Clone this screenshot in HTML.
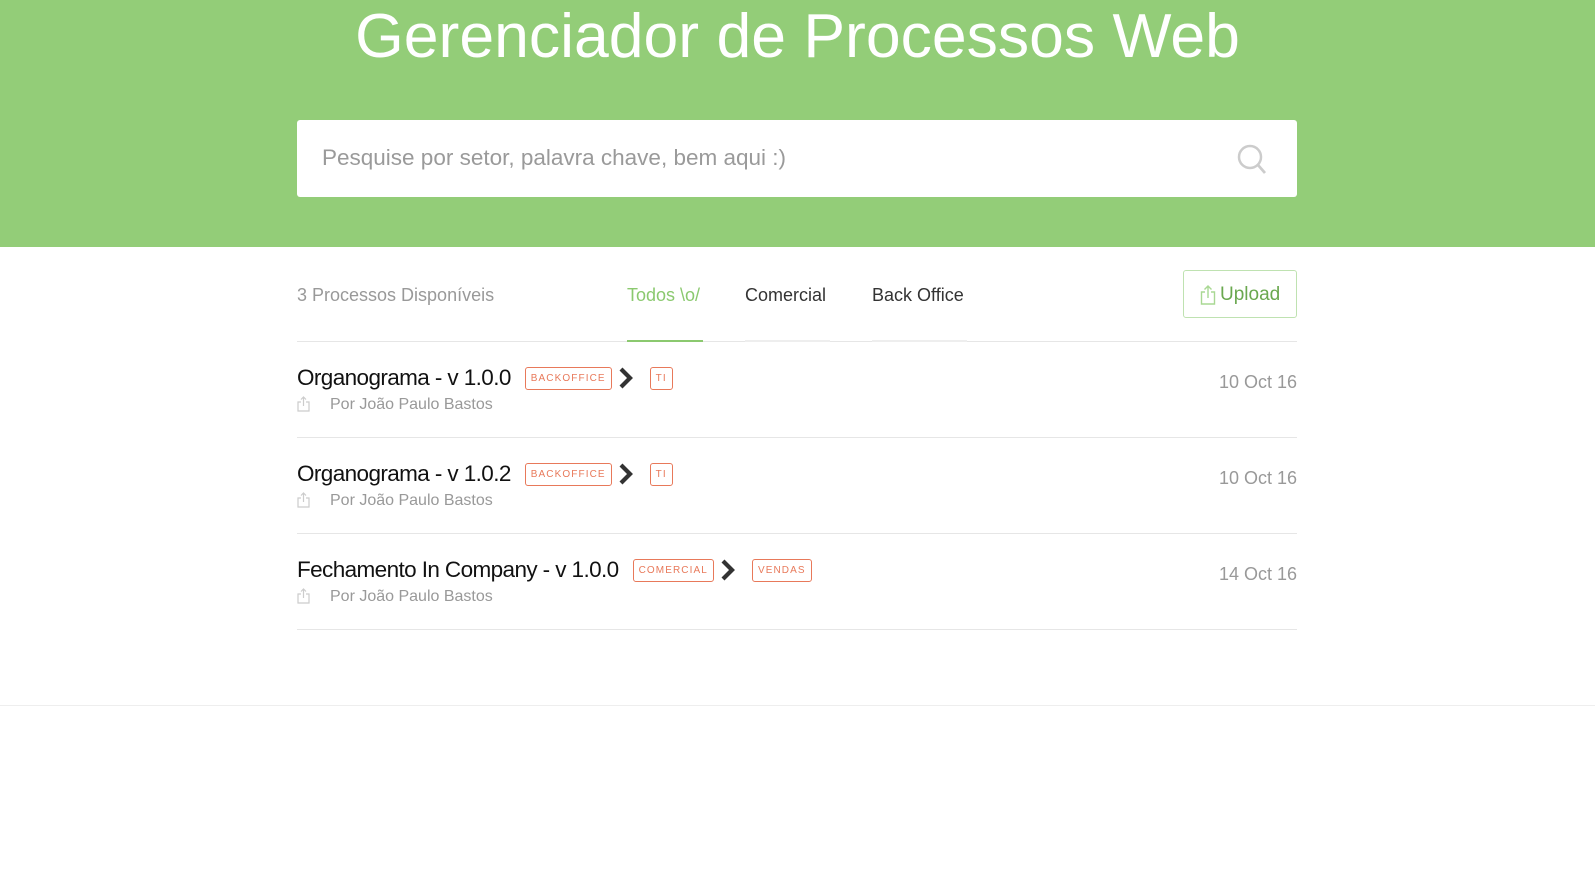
<!DOCTYPE html>
<html><head><meta charset="utf-8"><style>
*{margin:0;padding:0;box-sizing:border-box}
body{width:1595px;height:880px;background:#fff;font-family:"Liberation Sans",Arial,sans-serif;position:relative;overflow:hidden}
.hdr{position:absolute;left:0;top:0;width:1595px;height:247px;background:#93cd78}
.ttl{position:absolute;left:0;width:1595px;top:-1px;text-align:center;color:#fff;font-size:62.5px;line-height:75px}
.search{position:absolute;left:297px;top:120px;width:1000px;height:77px;background:#fff;border-radius:3px}
.search span{position:absolute;left:25px;top:26px;font-size:22.5px;color:#9a9a9a;line-height:24px}
.f{position:absolute;top:285px;font-size:18px;line-height:20px;color:#333}
.ul{position:absolute;top:340px;height:3px}
.line{position:absolute;height:1px;background:#e6e6e6}
.up{position:absolute;left:1183px;top:270px;width:114px;height:48px;border:1px solid #bfe2b1;border-radius:3px;color:#6aa84f;font-size:19px;line-height:48px;padding-left:36px}
.up svg{position:absolute;left:16px;top:14px}
.row{position:absolute;left:297px;width:1000px;height:96px}
.rt{position:absolute;left:0;top:23px;display:flex;align-items:center;height:28px}
.rt b{font-weight:normal;font-size:22.5px;color:#111;letter-spacing:-0.6px;white-space:nowrap}
.tag{border:1px solid #e8795a;color:#e8795a;font-size:10px;letter-spacing:1.1px;height:23px;line-height:21px;padding:0 5px;border-radius:3px;margin-left:14px}
.rt .tag+svg{margin-left:6px}
.chev{margin-right:2px}
.by{position:absolute;left:33px;top:55px;font-size:16px;color:#999}
.ic{position:absolute;left:0;top:55px}
.dt{position:absolute;right:0;top:31px;font-size:18px;color:#999}
</style></head><body>
<div class="hdr">
<div class="ttl">Gerenciador de Processos Web</div>
<div class="search"><span>Pesquise por setor, palavra chave, bem aqui :)</span></div>
<svg style="position:absolute;left:1237px;top:144px" width="30" height="32" viewBox="0 0 30 32"><circle cx="13" cy="13" r="11" fill="none" stroke="#ccc" stroke-width="2.5"/><line x1="21" y1="21" x2="28" y2="29" stroke="#ccc" stroke-width="2.8"/></svg>
</div>
<div class="f" style="left:297px;color:#999">3 Processos Disponíveis</div>
<div class="f" style="left:627px;color:#8bc96f">Todos \o/</div>
<div class="f" style="left:745px">Comercial</div>
<div class="f" style="left:872px">Back Office</div>
<div class="line" style="left:297px;top:341px;width:1000px"></div>
<div class="ul" style="left:627px;width:76px;background:#8bc96f;height:2px"></div>
<div class="ul" style="left:745px;width:85px;background:#eee;height:2px"></div>
<div class="ul" style="left:872px;width:95px;background:#eee;height:2px"></div>
<div class="up"><svg width="16" height="20" viewBox="0 0 16 20"><path d="M5 7H1.5v12h13V7H11M8 1v12M4.5 4.5L8 1l3.5 3.5" fill="none" stroke="#a9d893" stroke-width="1.4"/></svg>Upload</div>

<div class="row" style="top:341px">
<div class="rt"><b>Organograma - v 1.0.0</b><span class="tag">BACKOFFICE</span><svg class="chev" width="16" height="22" viewBox="0 0 16 22"><path d="M3 2l9 9-9 9" fill="none" stroke="#333" stroke-width="4.2"/></svg><span class="tag">TI</span></div>
<svg class="ic" width="13" height="16" viewBox="0 0 13 16"><path d="M4 6H1v9h11V6H9M6.5 1v9M4 3.5L6.5 1 9 3.5" fill="none" stroke="#ccc" stroke-width="1.2"/></svg>
<div class="by">Por João Paulo Bastos</div><div class="dt">10 Oct 16</div></div>
<div class="line" style="left:297px;top:437px;width:1000px"></div>

<div class="row" style="top:437px">
<div class="rt"><b>Organograma - v 1.0.2</b><span class="tag">BACKOFFICE</span><svg class="chev" width="16" height="22" viewBox="0 0 16 22"><path d="M3 2l9 9-9 9" fill="none" stroke="#333" stroke-width="4.2"/></svg><span class="tag">TI</span></div>
<svg class="ic" width="13" height="16" viewBox="0 0 13 16"><path d="M4 6H1v9h11V6H9M6.5 1v9M4 3.5L6.5 1 9 3.5" fill="none" stroke="#ccc" stroke-width="1.2"/></svg>
<div class="by">Por João Paulo Bastos</div><div class="dt">10 Oct 16</div></div>
<div class="line" style="left:297px;top:533px;width:1000px"></div>

<div class="row" style="top:533px">
<div class="rt"><b>Fechamento In Company - v 1.0.0</b><span class="tag">COMERCIAL</span><svg class="chev" width="16" height="22" viewBox="0 0 16 22"><path d="M3 2l9 9-9 9" fill="none" stroke="#333" stroke-width="4.2"/></svg><span class="tag">VENDAS</span></div>
<svg class="ic" width="13" height="16" viewBox="0 0 13 16"><path d="M4 6H1v9h11V6H9M6.5 1v9M4 3.5L6.5 1 9 3.5" fill="none" stroke="#ccc" stroke-width="1.2"/></svg>
<div class="by">Por João Paulo Bastos</div><div class="dt">14 Oct 16</div></div>
<div class="line" style="left:297px;top:629px;width:1000px"></div>

<div class="line" style="left:0;top:705px;width:1595px;background:#eee"></div>
</body></html>
